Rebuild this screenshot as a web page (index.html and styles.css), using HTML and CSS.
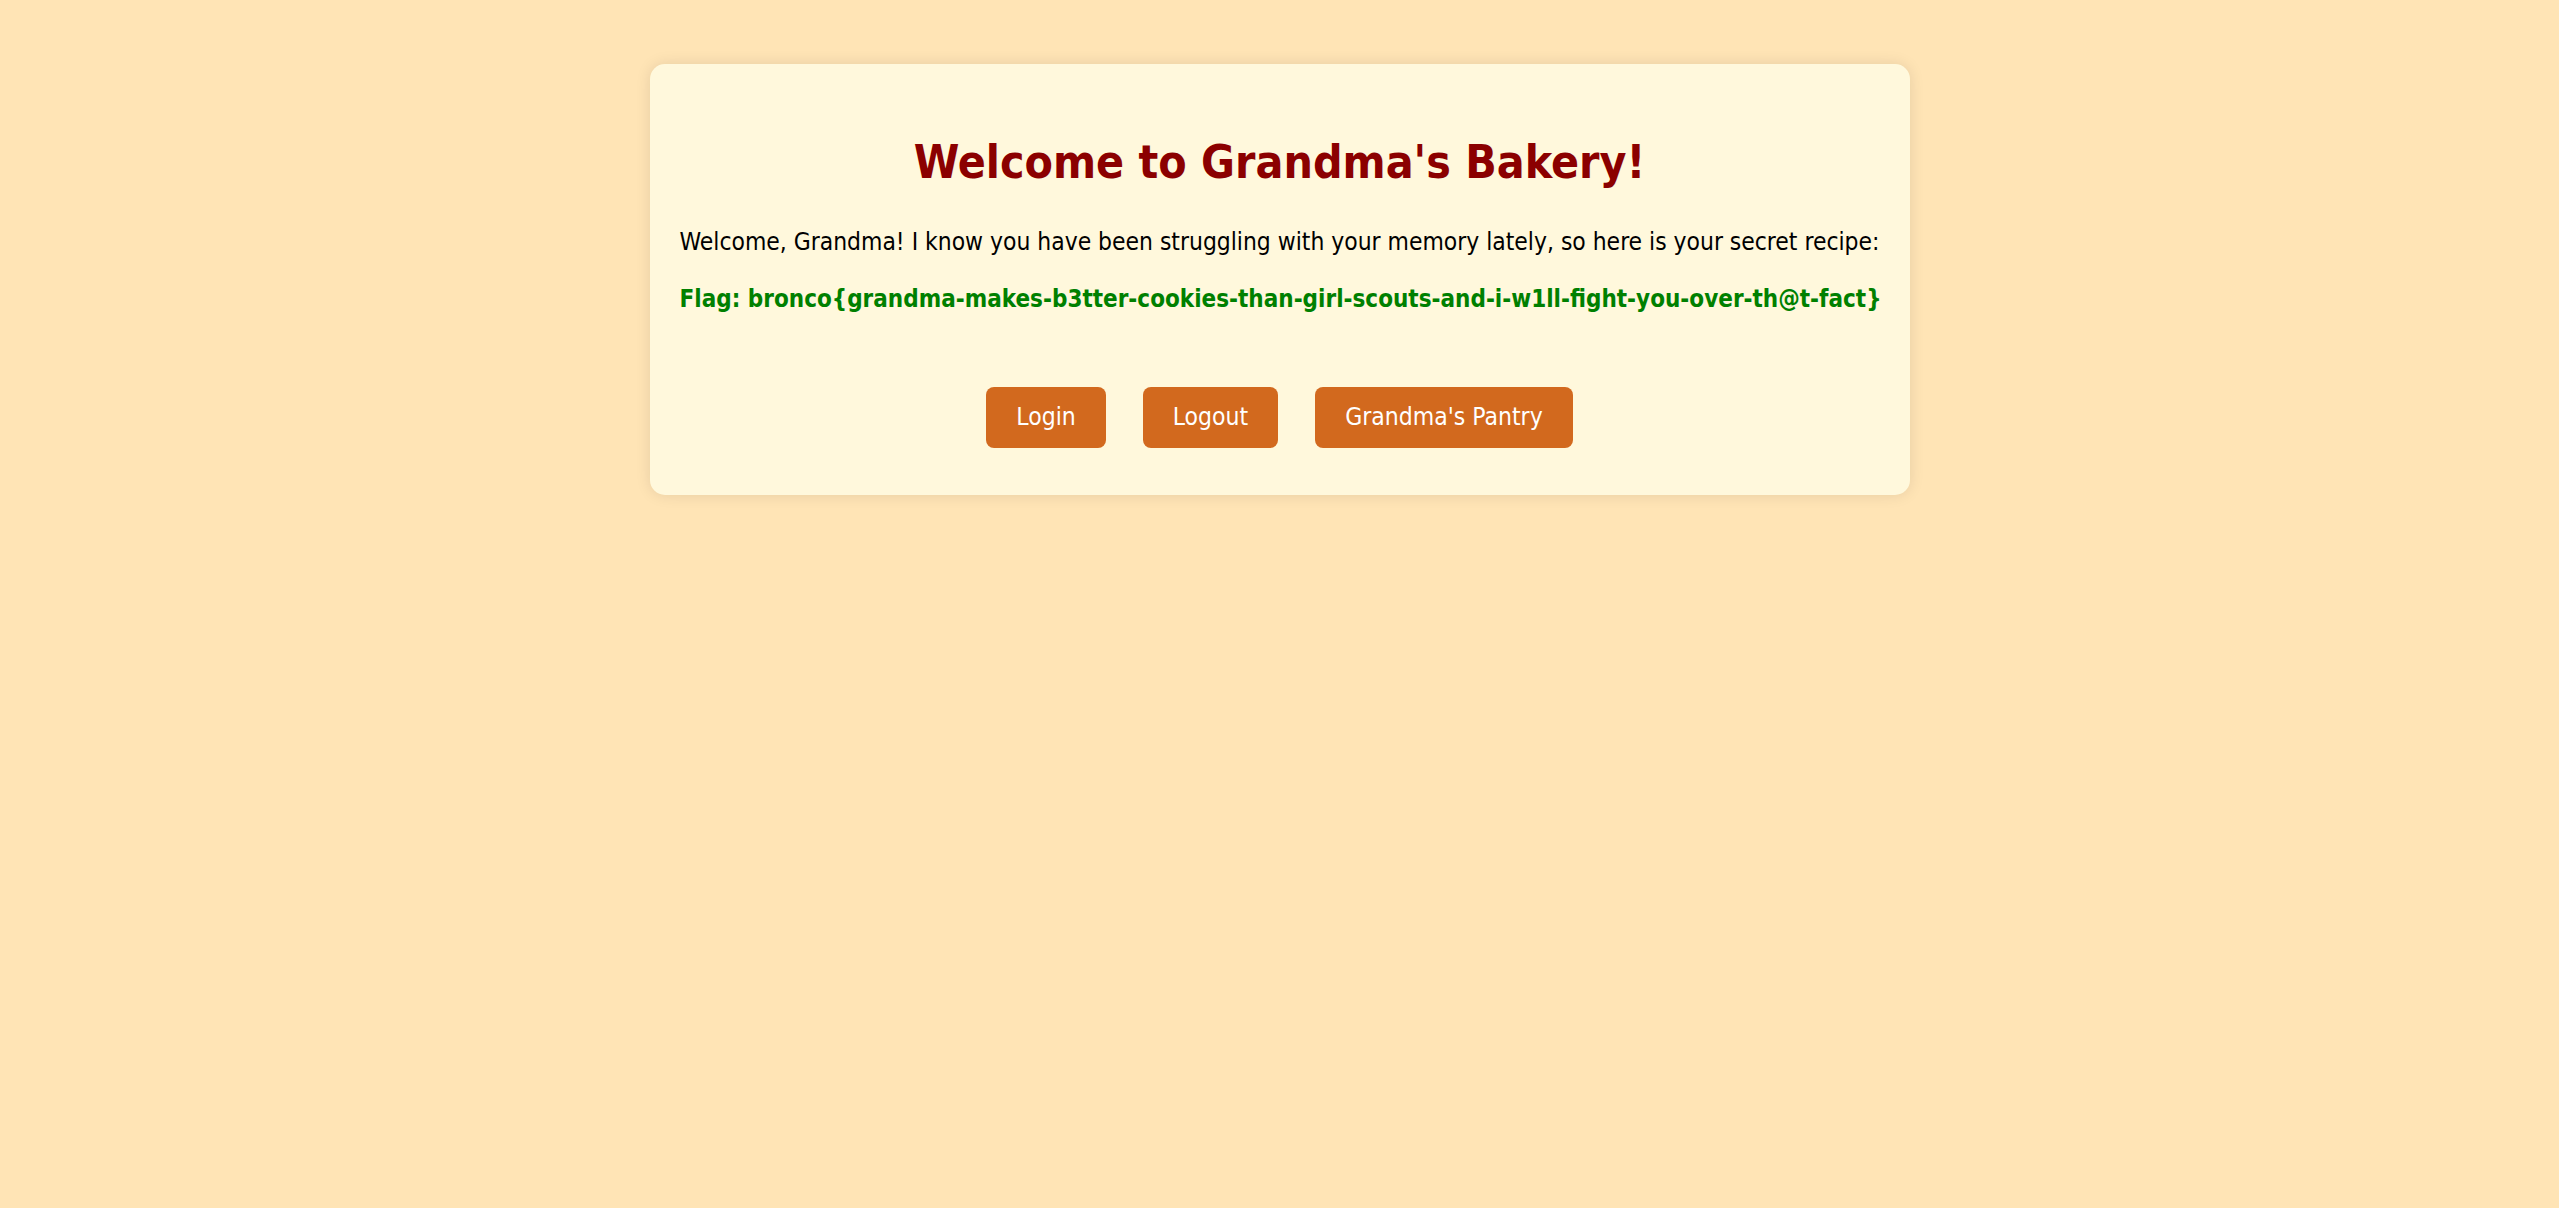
FILE: index.html
```html
<!DOCTYPE html>
<html lang="en">
<head>
<meta charset="utf-8">
<title>Grandma's Bakery</title>
<link rel="stylesheet" href="styles.css">
</head>
<body>
<div class="card">
  <h1 class="title">Welcome to Grandma's Bakery!</h1>
  <p class="message">Welcome, Grandma! I know you have been struggling with your memory lately, so here is your secret recipe:</p>
  <p class="flag">Flag: bronco{grandma-makes-b3tter-cookies-than-girl-scouts-and-i-w1ll-fight-you-over-th@t-fact}</p>
  <div class="actions">
    <a class="btn" href="#">Login</a>
    <a class="btn" href="#">Logout</a>
    <a class="btn" href="#">Grandma's Pantry</a>
  </div>
</div>
</body>
</html>
```

FILE: styles.css
```css
html, body {
  margin: 0;
  padding: 0;
}
body {
  background: #FFE4B5;
  font-family: "Comic Sans MS", "DejaVu Sans Condensed", "DejaVu Sans", sans-serif;
  color: #000;
  min-height: 1208px;
}
.card {
  width: 1200px;
  margin: 64px auto 0;
  padding: 30px;
  background: #FFF8DC;
  border-radius: 15px;
  box-shadow: 0 0 15px rgba(0, 0, 0, 0.1);
  text-align: center;
}
.title {
  color: #8B0000;
  font-size: 46px;
  line-height: 64px;
  font-weight: bold;
  margin: 36px 0 32px;
}
.message {
  font-size: 24.4px;
  line-height: 32px;
  margin: 0 0 25px;
  white-space: nowrap;
}
.flag {
  font-size: 24px;
  line-height: 32px;
  font-weight: bold;
  color: #008000;
  margin: 0;
  white-space: nowrap;
}
.actions {
  display: flex;
  justify-content: center;
  gap: 37px;
  margin-top: 72px;
  margin-bottom: 17px;
}
.btn {
  display: inline-block;
  padding: 16px 30px 17px;
  line-height: 28px;
  background: #D2691E;
  color: #fff;
  font-size: 24.5px;
  text-decoration: none;
  border-radius: 8px;
}
```
